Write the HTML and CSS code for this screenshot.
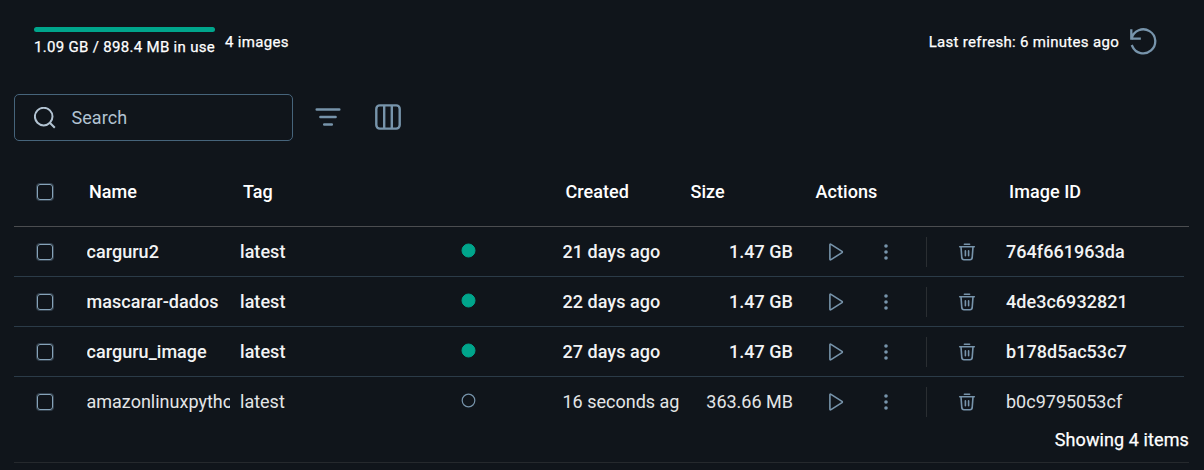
FILE: index.html
```html
<!DOCTYPE html>
<html lang="en">
<head>
<meta charset="utf-8">
<title>Images</title>
<link rel="stylesheet" href="styles.css">
</head>
<body>
<svg class="sprite" width="0" height="0">
  <symbol id="play" viewBox="0 0 16 20"><path d="M1.9 2.9Q1.9 1.6 3 2.3L14 9.4Q14.7 10 14 10.6L3 17.7Q1.9 18.4 1.9 17.1Z" fill="none" stroke="currentColor" stroke-width="1.6" stroke-linejoin="round"/></symbol>
  <symbol id="more" viewBox="0 0 6 18"><circle cx="3" cy="3" r="1.8" fill="currentColor"/><circle cx="3" cy="9" r="1.8" fill="currentColor"/><circle cx="3" cy="15" r="1.8" fill="currentColor"/></symbol>
  <symbol id="trash" viewBox="0 0 18 18"><g fill="none" stroke="currentColor" stroke-width="1.6" stroke-linecap="round" stroke-linejoin="round"><path d="M6.4 1.2h5.2M1.7 3.7h14.6M3 3.9l.8 10.8q.2 2 2.2 2h6q2 0 2.2-2L15 3.9M7.4 7.9v4.8M10.6 7.9v4.8"/></g></symbol>
</svg>
<main class="page">
  <header class="topbar">
    <div class="usage"><div class="usage-bar"></div><span>1.09 GB / 898.4 MB in use</span></div>
    <span class="count">4 images</span>
    <span class="refresh">Last refresh: 6 minutes ago</span>
    <svg class="refresh-icon" width="28" height="28" viewBox="0 0 28 28"><path d="M2.3 2.3v8.4h8.4M2.6 10.5A12 12 0 1 1 3.2 18" fill="none" stroke="currentColor" stroke-width="2.3" stroke-linecap="square"/></svg>
  </header>
  <div class="toolbar">
    <label class="search">
      <svg width="22" height="22" viewBox="0 0 22 22"><g fill="none" stroke="currentColor" stroke-width="2"><circle cx="9.7" cy="9.6" r="8.8"/><path d="M15.8 15.8l5 5"/></g></svg>
      <span>Search</span>
    </label>
    <svg class="filter" width="26" height="20" viewBox="0 0 26 20"><path d="M1.7 2.4h22.6M5.4 10h15.2M9.2 17.5h7.6" fill="none" stroke="currentColor" stroke-width="2.5" stroke-linecap="round"/></svg>
    <svg class="columns" width="26" height="26" viewBox="0 0 26 26"><path d="M9.2 1.5v23M16.8 1.5v23" stroke="currentColor" stroke-width="2.4"/><rect x="1.3" y="1.4" width="23.4" height="23.2" rx="3.5" fill="none" stroke="currentColor" stroke-width="2.4"/></svg>
  </div>
  <section class="table">
    <div class="row head"><i class="check"></i><span>Name</span><span>Tag</span><span></span><span>Created</span><span>Size</span><span>Actions</span><span>Image ID</span></div>
    <div class="row item used"><i class="check"></i><span class="name">carguru2</span><span>latest</span><svg class="dot" viewBox="0 0 15 15"><circle cx="7.5" cy="7.5" r="6.5"/></svg><span class="created">21 days ago</span><span class="size">1.47 GB</span><div class="actions"><svg class="play"><use href="#play"/></svg><svg class="more"><use href="#more"/></svg><i class="rule"></i><svg class="trash"><use href="#trash"/></svg></div><span>764f661963da</span></div>
    <div class="row item used"><i class="check"></i><span class="name">mascarar-dados</span><span>latest</span><svg class="dot" viewBox="0 0 15 15"><circle cx="7.5" cy="7.5" r="6.5"/></svg><span class="created">22 days ago</span><span class="size">1.47 GB</span><div class="actions"><svg class="play"><use href="#play"/></svg><svg class="more"><use href="#more"/></svg><i class="rule"></i><svg class="trash"><use href="#trash"/></svg></div><span>4de3c6932821</span></div>
    <div class="row item used"><i class="check"></i><span class="name">carguru_image</span><span>latest</span><svg class="dot" viewBox="0 0 15 15"><circle cx="7.5" cy="7.5" r="6.5"/></svg><span class="created">27 days ago</span><span class="size">1.47 GB</span><div class="actions"><svg class="play"><use href="#play"/></svg><svg class="more"><use href="#more"/></svg><i class="rule"></i><svg class="trash"><use href="#trash"/></svg></div><span>b178d5ac53c7</span></div>
    <div class="row item"><i class="check"></i><span class="name">amazonlinuxpython</span><span>latest</span><svg class="dot" viewBox="0 0 15 15"><circle cx="7.5" cy="7.5" r="6.3"/></svg><span class="created">16 seconds ago</span><span class="size">363.66 MB</span><div class="actions"><svg class="play"><use href="#play"/></svg><svg class="more"><use href="#more"/></svg><i class="rule"></i><svg class="trash"><use href="#trash"/></svg></div><span>b0c9795053cf</span></div>
    <footer class="footer">Showing 4 items</footer>
  </section>
</main>
</body>
</html>
```
FILE: styles.css
```css
* { box-sizing: border-box; }
body { margin: 0; background: #10151b; color: #fff; font: 500 18px/24px Roboto, sans-serif; }
svg { display: block; flex: none; color: #7794ab; }
.sprite { position: absolute; }
.page { height: 470px; padding: 0 15px 0 14px; overflow: hidden; white-space: nowrap; }
.topbar { display: flex; height: 94px; padding: 27px 32px 0 20px; font-size: 15px; font-weight: 400; line-height: 20px; letter-spacing: 0.31px; -webkit-text-stroke: 0.25px; }
.usage { width: 181px; }
.usage-bar { height: 5px; margin-bottom: 5px; border-radius: 3px; background: #00a58c; }
.count { margin: 5px 0 0 10px; }
.refresh { margin: 5px 10px 0 auto; }
.refresh-icon { margin-top: 1px; }
.toolbar { display: flex; align-items: center; height: 47px; }
.search { display: flex; align-items: center; gap: 15.5px; width: 279px; height: 47px; padding-left: 19px; border: 1px solid #46647b; border-radius: 5px; color: #b2c3d2; font-weight: 400; letter-spacing: 0.05px; }
.search svg { color: #b2c3d2; }
.filter { margin: -2px 0 0 22px; }
.columns { margin: -2px 0 0 34px; }
.table { margin-top: 16px; }
.row { display: grid; align-items: center; padding-left: 22px; }
.head { height: 70px; border-bottom: 1px solid #4b4d50; grid-template-columns: 53px 154px 218.5px 104px 125px 125px 193.5px 1fr; letter-spacing: 0.06px; }
.item { grid-template-columns: 50.5px 153.5px 221px 101.5px 117px 113.5px 213px 1fr; width: 1170px; height: 50px; border-bottom: 1px solid #2b3b48; color: #e3e5e7; font-weight: 400; }
.item:nth-last-child(2) { border-bottom-color: transparent; }
.used { color: #f2f3f4; font-weight: 500; letter-spacing: 0.04px; }
.check { width: 16px; height: 16px; margin: 1px 0 0 1px; border: 1px solid #86a3b9; border-radius: 3px; box-shadow: 0 0 0 1px rgba(119, 148, 171, 0.35); }
.name { width: 143.5px; overflow: hidden; }
.created { width: 116.5px; overflow: hidden; }
.size { text-align: right; }
.dot { width: 15px; height: 15px; margin-bottom: 2px; fill: none; stroke: #7794ab; stroke-width: 1.2; }
.used .dot { fill: #00a58c; stroke: #00a58c; stroke-width: 1; }
.actions { display: flex; align-items: center; padding-left: 35px; }
.play { width: 16px; height: 20px; }
.more { width: 6px; height: 18px; margin-left: 39px; }
.rule { width: 1px; height: 30px; margin-left: 37px; background: #2a2e32; }
.trash { width: 18px; height: 18px; margin-left: 31px; }
.footer { height: 36px; padding-top: 1px; border-bottom: 1px solid #25292d; font-weight: 400; letter-spacing: 0.1px; -webkit-text-stroke: 0.25px; text-align: right; }
```
